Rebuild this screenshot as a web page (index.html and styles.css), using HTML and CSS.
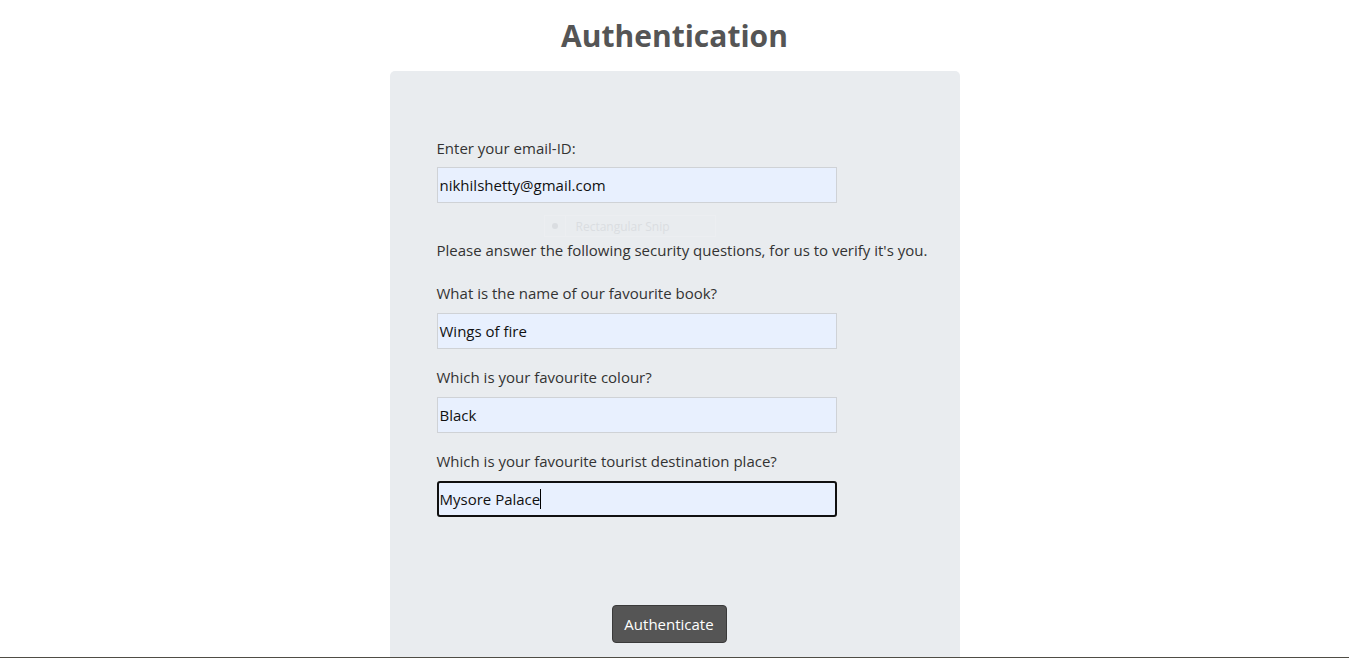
FILE: index.html
```html
<!DOCTYPE html>
<html>
<head>
<meta charset="utf-8">
<title>Authentication</title>
<link rel="stylesheet" href="styles.css">
</head>
<body>
<h1 class="title">Authentication</h1>
<div class="card">
  <form class="auth-form">
    <label class="label label-first">Enter your email-ID:</label>
    <div class="field">nikhilshetty@gmail.com</div>
    <div class="snip"><span class="snip-icon"></span><span class="snip-text">Rectangular Snip</span></div>
    <p class="intro">Please answer the following security questions, for us to verify it's you.</p>
    <label class="label">What is the name of our favourite book?</label>
    <div class="field">Wings of fire</div>
    <label class="label">Which is your favourite colour?</label>
    <div class="field">Black</div>
    <label class="label">Which is your favourite tourist destination place?</label>
    <div class="field field-focus">Mysore Palace<span class="caret"></span></div>
    <div class="actions">
      <button type="button" class="btn">Authenticate</button>
    </div>
  </form>
</div>
</body>
</html>
```
FILE: styles.css
```css
html, body {
  margin: 0;
  padding: 0;
  background: #ffffff;
}
body {
  font-family: "Open Sans", "Noto Sans", sans-serif;
  color: #212529;
  overflow: hidden;
  height: 658px;
  box-sizing: border-box;
  border-bottom: 1px solid #4f4d45;
}
.title {
  margin: 0;
  padding-top: 14px;
  height: 71px;
  box-sizing: border-box;
  text-align: center;
  font-size: 30px;
  line-height: 44px;
  font-weight: 700;
  color: #555555;
}
.card {
  width: 570px;
  margin: 0 auto;
  background: #e9ecef;
  border-radius: 5px 5px 0 0;
  padding: 65px 47px 0;
  box-sizing: border-box;
  height: 586px;
}
.auth-form {
  display: flex;
  flex-direction: column;
  align-items: flex-start;
}
.label {
  display: block;
  font-size: 15px;
  line-height: 24px;
  color: #333;
  margin-top: 16px;
  margin-bottom: 8px;
}
.label-first {
  margin-top: 0;
  margin-bottom: 7px;
}
.field {
  width: 400px;
  height: 36px;
  box-sizing: border-box;
  border: 1px solid #cfd2d6;
  background: #e8f0fe;
  font-size: 15px;
  line-height: 34px;
  padding-left: 2px;
  color: #111;
  display: flex;
  align-items: center;
}
.field-focus {
  border: 2px solid #101010;
  border-radius: 3px;
  padding-left: 1px;
}
.caret {
  display: inline-block;
  width: 1px;
  height: 20px;
  background: #000;
}
.snip {
  margin-top: 12px;
  margin-left: 107px;
  height: 22px;
  width: 172px;
  display: flex;
  align-items: center;
  opacity: 0.3;
  border: 1px solid #f4f5f6;
  box-sizing: border-box;
}
.snip-icon {
  width: 20px;
  height: 20px;
  border-right: 1px solid #f4f5f6;
  display: flex;
  align-items: center;
  justify-content: center;
}
.snip-icon::after {
  content: "";
  width: 6px;
  height: 6px;
  border-radius: 50%;
  background: #b9bdc2;
}
.snip-text {
  font-size: 12px;
  color: #b9bdc2;
  margin-left: 10px;
}
.intro {
  margin: 1px 0 3px;
  font-size: 15px;
  line-height: 24px;
  color: #333;
  white-space: nowrap;
}
.actions {
  width: 100%;
  display: flex;
  justify-content: center;
  padding-right: 11px;
  box-sizing: border-box;
  margin-top: 88px;
}
.btn {
  width: 115px;
  height: 38px;
  background: #555555;
  border: 1px solid #3a3a3a;
  border-radius: 4px;
  color: #ffffff;
  font-family: "Open Sans", "Noto Sans", sans-serif;
  font-size: 15px;
  padding: 0;
}
```
